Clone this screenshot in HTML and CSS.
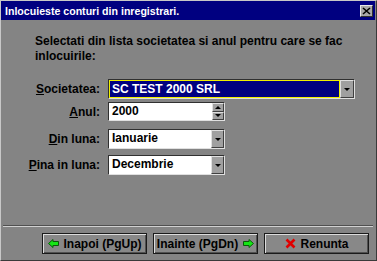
FILE: index.html
```html
<!DOCTYPE html>
<html lang="ro">
<head>
  <meta charset="UTF-8">
  <title>Inlocuieste conturi</title>
  <link rel="stylesheet" href="styles.css">
</head>
<body>
  <div class="window">
    <div class="titlebar">
      <span class="title">Inlocuieste conturi din inregistrari.</span>
      <span class="close">
        <svg width="9" height="8" viewBox="0 0 9 8"><path d="M1 1 L8 7 M8 1 L1 7" stroke="#000" stroke-width="1.6"/></svg>
      </span>
    </div>

    <p class="intro">Selectati din lista societatea si anul pentru care se fac inlocuirile:</p>

    <div class="form">
      <div class="row">
        <label class="lbl"><u>S</u>ocietatea:</label>
        <div class="combo wide focused">
          <span class="val">SC TEST 2000 SRL</span>
          <span class="drop"><i class="tri-down"></i></span>
        </div>
      </div>

      <div class="row row-year">
        <label class="lbl"><u>A</u>nul:</label>
        <div class="combo short">
          <span class="val">2000</span>
          <span class="spin">
            <span class="spin-btn"><i class="tri-up"></i></span>
            <span class="spin-btn"><i class="tri-down"></i></span>
          </span>
        </div>
      </div>

      <div class="row row-month">
        <label class="lbl"><u>D</u>in luna:</label>
        <div class="combo">
          <span class="val">Ianuarie</span>
          <span class="drop"><i class="tri-down"></i></span>
        </div>
      </div>

      <div class="row">
        <label class="lbl"><u>P</u>ina in luna:</label>
        <div class="combo">
          <span class="val">Decembrie</span>
          <span class="drop"><i class="tri-down"></i></span>
        </div>
      </div>
    </div>

    <div class="footer">
      <button class="btn">
        <svg width="11" height="9" viewBox="0 0 11 9"><polygon points="0.5,4.5 5,0.5 5,2.5 10.5,2.5 10.5,6.5 5,6.5 5,8.5" fill="#16e616" stroke="#0a5a0a" stroke-width="1"/></svg>
        <span>Inapoi (PgUp)</span>
      </button>
      <button class="btn">
        <span>Inainte (PgDn)</span>
        <svg width="11" height="9" viewBox="0 0 11 9"><polygon points="10.5,4.5 6,0.5 6,2.5 0.5,2.5 0.5,6.5 6,6.5 6,8.5" fill="#16e616" stroke="#0a5a0a" stroke-width="1"/></svg>
      </button>
      <button class="btn">
        <svg width="11" height="11" viewBox="0 0 11 11"><path d="M1.5 1.5 L9.5 9.5 M9.5 1.5 L1.5 9.5" stroke="#e00000" stroke-width="2.6"/></svg>
        <span>Renunta</span>
      </button>
    </div>
  </div>
</body>
</html>
```

FILE: styles.css
```css
html, body {
  margin: 0;
  padding: 0;
  background: #848484;
}
.window {
  width: 377px;
  height: 261px;
  box-sizing: border-box;
  border: 1px solid;
  border-color: #c8c8c8 #3a3a3a #3a3a3a #c8c8c8;
  padding: 0 1px 0 0;
  background: #848484;
  font-family: "Liberation Sans", Arial, sans-serif;
  font-weight: bold;
  font-size: 12px;
  color: #000;
  display: flex;
  flex-direction: column;
}
.titlebar {
  height: 19px;
  background: #000080;
  color: #fff;
  display: flex;
  align-items: center;
  justify-content: space-between;
  padding: 0 2px 0 4px;
}
.title {
  font-size: 10.6px;
}
.close {
  width: 11px;
  height: 10px;
  background: #a8a8a8;
  border: 1px solid;
  border-color: #e8e8e8 #303030 #303030 #e8e8e8;
  display: flex;
  align-items: center;
  justify-content: center;
}
.intro {
  margin: 14px 30px 0 34px;
  line-height: 15px;
}
.form {
  margin-top: 15px;
  display: flex;
  flex-direction: column;
  gap: 6px;
}
.row {
  display: flex;
  align-items: center;
  gap: 8px;
}
.row-year {
  margin-top: -3px;
}
.row-month {
  margin-top: 2px;
}
.lbl {
  width: 99px;
  text-align: right;
}
.combo {
  width: 117px;
  height: 20px;
  box-sizing: border-box;
  background: #fff;
  border: 1px solid;
  border-color: #303030 #e0e0e0 #e0e0e0 #303030;
  display: flex;
  align-items: stretch;
}
.combo.short {
  height: 19px;
}
.combo.wide {
  width: 247px;
}
.combo .val {
  flex: 1;
  padding-left: 3px;
  line-height: 17px;
}
.combo.focused .val {
  background: #000080;
  color: #fff;
  border: 1px solid #f0f000;
  line-height: 16px;
  padding-left: 2px;
}
.drop {
  width: 11px;
  background: #a0a0a0;
  border: 1px solid;
  border-color: #e0e0e0 #404040 #404040 #e0e0e0;
  display: flex;
  align-items: center;
  justify-content: center;
}
.wide .drop {
  width: 12px;
}
.spin {
  width: 12px;
  display: flex;
  flex-direction: column;
}
.spin-btn {
  flex: 1;
  background: #a0a0a0;
  border: 1px solid;
  border-color: #e0e0e0 #404040 #404040 #e0e0e0;
  display: flex;
  align-items: center;
  justify-content: center;
}
.tri-down, .tri-up {
  width: 0;
  height: 0;
  border-left: 3px solid transparent;
  border-right: 3px solid transparent;
}
.tri-down {
  border-top: 3px solid #000;
}
.tri-up {
  border-bottom: 3px solid #000;
}
.footer {
  margin-top: auto;
  border-top: 1px solid #505050;
  box-shadow: inset 0 1px 0 #d0d0d0;
  margin-left: 2px;
  margin-right: 2px;
  padding: 7px 4px 6px 0;
  display: flex;
  justify-content: flex-end;
  gap: 6px;
}
.btn {
  width: 105px;
  height: 21px;
  background: #888;
  border: 1px solid #1a1a1a;
  box-shadow: inset 1px 1px 0 #dcdcdc, inset -1px -1px 0 #505050;
  font-family: "Liberation Sans", Arial, sans-serif;
  font-weight: bold;
  font-size: 12px;
  color: #000;
  display: flex;
  align-items: center;
  justify-content: center;
  gap: 5px;
  padding: 0;
}
```
